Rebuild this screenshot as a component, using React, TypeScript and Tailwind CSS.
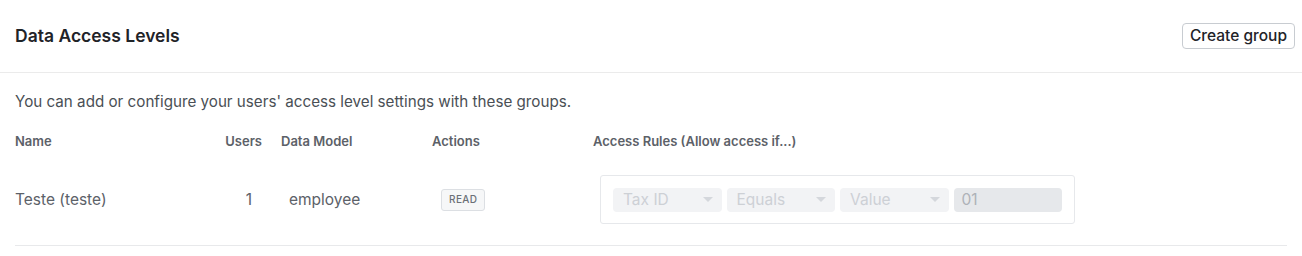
import React from 'react';

interface AccessGroup {
  name: string;
  users: number;
  dataModel: string;
  actions: string[];
  rule: { field: string; operator: string; valueType: string; value: string };
}

const groups: AccessGroup[] = [
  {
    name: 'Teste (teste)',
    users: 1,
    dataModel: 'employee',
    actions: ['READ'],
    rule: { field: 'Tax ID', operator: 'Equals', valueType: 'Value', value: '01' },
  },
];

function Caret() {
  return (
    <svg width="10" height="6" viewBox="0 0 10 6" className="shrink-0">
      <path d="M0 0 L10 0 L5 5 Z" fill="#d4d7dc" />
    </svg>
  );
}

// disabled select look-alike
function FakeSelect({ label }: { label: string }) {
  return (
    <div className="flex h-[24px] w-[109px] items-center justify-between rounded-[4px] bg-[#f2f3f5] pl-[10px] pr-[9px] text-[15.5px] text-[#cdd0d5]">
      <span>{label}</span>
      <Caret />
    </div>
  );
}

export default function App() {
  return (
    <div className="w-[1302px] h-[256px] bg-white font-['Inter',sans-serif] text-[#1f2328]">
      <div className="flex h-[73px] items-center justify-between border-b border-[#ebebeb] pl-[15px] pr-[7px]">
        <h2 className="text-[17.5px] font-semibold text-[#1f2328]">Data Access Levels</h2>
        <button className="h-[26px] rounded-[4px] border border-[#c8ccd1] px-[7px] text-[15.5px] font-medium text-[#1f2328]">
          Create group
        </button>
      </div>

      <div className="px-[15px]">
        <p className="pt-[19px] text-[15.2px] leading-[20px] text-[#4a4f55]">
          You can add or configure your users' access level settings with these groups.
        </p>

        <div className="mt-[21px] flex text-[13px] font-semibold leading-[16px] text-[#5c6168]">
          <div className="w-[205px]">Name</div>
          <div className="w-[47px] pr-[5px] text-right">Users</div>
          <div className="w-[151px] pl-[14px]">Data Model</div>
          <div className="w-[161px] pl-[14px]">Actions</div>
          <div className="pl-[14px]">Access Rules (Allow access if...)</div>
        </div>

        {groups.map((g) => (
          <div key={g.name} className="mt-[24px] flex h-[73px] items-start border-b border-[#e8e9eb] pt-[2px] text-[15.5px] text-[#5c6168]">
            <div className="flex h-[49px] w-[205px] items-center">{g.name}</div>
            <div className="flex h-[49px] w-[47px] items-center justify-end pr-[15px]">{g.users}</div>
            <div className="flex h-[49px] w-[151px] items-center pl-[22px]">{g.dataModel}</div>
            <div className="flex h-[49px] w-[161px] items-center gap-1 pl-[23px]">
              {g.actions.map((a) => (
                <span
                  key={a}
                  className="flex h-[22px] items-center rounded-[3px] border border-[#dcdfe3] bg-[#f6f7f8] px-[7px] text-[10px] font-medium tracking-[0.4px] text-[#6b7077]"
                >
                  {a}
                </span>
              ))}
            </div>
            <div className="pl-[21px]">
              <div className="flex h-[49px] w-[475px] items-center gap-[5px] rounded-[3px] border border-[#e6e8eb] px-[12px]">
                <FakeSelect label={g.rule.field} />
                <FakeSelect label={g.rule.operator} />
                <FakeSelect label={g.rule.valueType} />
                <div className="flex h-[24px] w-[109px] items-center rounded-[4px] bg-[#e6e8eb] pl-[8px] text-[15.5px] text-[#aeb2b8]">
                  {g.rule.value}
                </div>
              </div>
            </div>
          </div>
        ))}
      </div>
    </div>
  );
}
